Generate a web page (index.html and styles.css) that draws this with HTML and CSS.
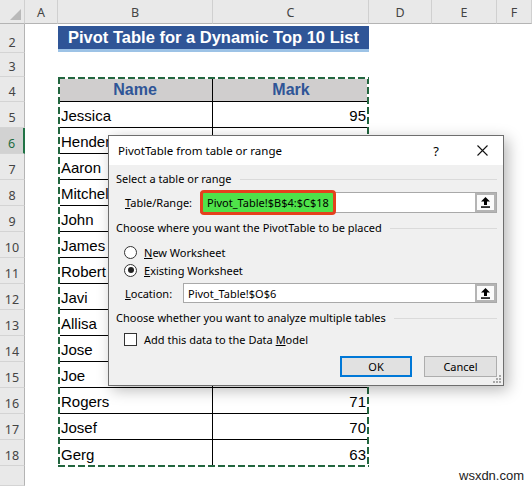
FILE: index.html
```html
<!DOCTYPE html>
<html>
<head>
<meta charset="utf-8">
<link rel="stylesheet" href="styles.css">
</head>
<body>
<div class="app">
  <div class="sheet">
    <div class="corner"><svg width="11" height="11" viewBox="0 0 11 11"><polygon points="11,0 11,11 0,11" fill="#b9b9b9"/></svg></div>
    <div class="ch">A</div>
    <div class="ch">B</div>
    <div class="ch">C</div>
    <div class="ch">D</div>
    <div class="ch">E</div>
    <div class="ch">F</div>

    <div class="rh">2</div><div class="title">Pivot Table for a Dynamic Top 10 List</div>
    <div class="rh">3</div>
    <div class="rh">4</div><div class="th th-name">Name</div><div class="th th-mark">Mark</div>
    <div class="rh">5</div><div class="td name">Jessica</div><div class="td num">95</div>
    <div class="rh sel">6</div><div class="td name">Henderson</div><div class="td num"></div>
    <div class="rh">7</div><div class="td name">Aaron</div><div class="td num"></div>
    <div class="rh">8</div><div class="td name">Mitchell</div><div class="td num"></div>
    <div class="rh">9</div><div class="td name">John</div><div class="td num"></div>
    <div class="rh">10</div><div class="td name">James</div><div class="td num"></div>
    <div class="rh">11</div><div class="td name">Robert</div><div class="td num"></div>
    <div class="rh">12</div><div class="td name">Javi</div><div class="td num"></div>
    <div class="rh">13</div><div class="td name">Allisa</div><div class="td num"></div>
    <div class="rh">14</div><div class="td name">Jose</div><div class="td num"></div>
    <div class="rh">15</div><div class="td name">Joe</div><div class="td num"></div>
    <div class="rh">16</div><div class="td name">Rogers</div><div class="td num">71</div>
    <div class="rh">17</div><div class="td name">Josef</div><div class="td num">70</div>
    <div class="rh">18</div><div class="td name last">Gerg</div><div class="td num last">63</div>
    <div class="rh"></div>
  </div>

  <div class="marquee"></div>

  <div class="dialog">
    <div class="dlg-title">
      <span class="dlg-caption">PivotTable from table or range</span>
      <span class="dlg-help">?</span>
      <span class="dlg-close"><svg width="11" height="11" viewBox="0 0 11 11"><path d="M0.5 0.5 L10.5 10.5 M10.5 0.5 L0.5 10.5" stroke="#111" stroke-width="1.1" fill="none"/></svg></span>
    </div>
    <div class="dlg-body">
      <div class="group g1">Select a table or range<span class="rule"></span></div>
      <div class="field f1">
        <span class="lbl lbl-range"><u>T</u>able/Range:</span>
        <div class="input in-range">
          <span class="hl">Pivot_Table!$B$4:$C$18</span>
          <span class="pick"><svg width="9" height="11" viewBox="0 0 9 11"><polygon points="4.5,0 9,4.5 6,4.5 6,8 3,8 3,4.5 0,4.5" fill="#000"/><rect x="0" y="9.3" width="9" height="1.5" fill="#000"/></svg></span>
        </div>
      </div>
      <div class="group g2">Choose where you want the PivotTable to be placed<span class="rule"></span></div>
      <div class="opt o1"><span class="radio"></span><span><u>N</u>ew Worksheet</span></div>
      <div class="opt o2"><span class="radio on"></span><span><u>E</u>xisting Worksheet</span></div>
      <div class="field f2">
        <span class="lbl lbl-loc"><u>L</u>ocation:</span>
        <div class="input in-loc">
          <span class="val">Pivot_Table!$O$6</span>
          <span class="pick"><svg width="9" height="11" viewBox="0 0 9 11"><polygon points="4.5,0 9,4.5 6,4.5 6,8 3,8 3,4.5 0,4.5" fill="#000"/><rect x="0" y="9.3" width="9" height="1.5" fill="#000"/></svg></span>
        </div>
      </div>
      <div class="group g3">Choose whether you want to analyze multiple tables<span class="rule"></span></div>
      <div class="opt c1"><span class="check"></span><span>Add this data to the Data <u>M</u>odel</span></div>
      <div class="buttons">
        <span class="btn btn-ok">OK</span>
        <span class="btn">Cancel</span>
      </div>
    </div>
    <svg class="grip" width="8" height="8" viewBox="0 0 8 8"><g fill="#a8a8a8"><rect x="6" y="0" width="2" height="2"/><rect x="3" y="3" width="2" height="2"/><rect x="6" y="3" width="2" height="2"/><rect x="0" y="6" width="2" height="2"/><rect x="3" y="6" width="2" height="2"/><rect x="6" y="6" width="2" height="2"/></g></svg>
  </div>

  <div class="watermark">wsxdn.com</div>
</div>
</body>
</html>
```

FILE: styles.css
```css
html, body {
  margin: 0;
  padding: 0;
  background: #fff;
}
body {
  width: 532px;
  height: 486px;
  overflow: hidden;
  font-family: "Liberation Sans", Arial, sans-serif;
}
.app {
  position: relative;
  width: 532px;
  height: 486px;
  overflow: hidden;
}

/* ---------- sheet ---------- */
.sheet {
  display: grid;
  grid-template-columns: 25px 33px 155px 156px 63px 65px 35px;
  grid-template-rows: 24px 29px 24px 25px repeat(14, 26px) 20px;
}
.corner, .ch {
  background: #e9e9e9;
  border-bottom: 1px solid #b4b4b4;
  border-right: 1px solid #d0d0d0;
  box-sizing: border-box;
}
.corner {
  display: flex;
  align-items: flex-end;
  justify-content: flex-end;
  padding: 0 3px 3px 0;
}
.ch {
  display: flex;
  align-items: center;
  justify-content: center;
  padding-top: 1px;
  font-family: "Noto Sans", sans-serif;
  font-size: 12.5px;
  color: #444;
}
.rh {
  grid-column: 1;
  background: #e9e9e9;
  border-bottom: 1px solid #d4d4d4;
  border-right: 1px solid #b4b4b4;
  box-sizing: border-box;
  display: flex;
  align-items: flex-end;
  justify-content: center;
  padding-bottom: 1px;
  line-height: 16px;
  font-family: "Noto Sans", sans-serif;
  font-size: 12.5px;
  color: #444;
}
.rh.sel {
  background: #d2d2d2;
  color: #1e6b40;
  border-right: 2px solid #217346;
}
.title {
  grid-column: 3 / span 2;
  margin-top: 2px;
  height: 23px;
  background: #2f5597;
  border-bottom: 3px solid #9dc3e6;
  color: #fff;
  font-weight: bold;
  font-size: 16.5px;
  line-height: 23px;
  text-align: center;
  white-space: nowrap;
}
.th {
  background: #d0cece;
  border-bottom: 1px solid #000;
  box-sizing: border-box;
  color: #2f5597;
  font-weight: bold;
  font-size: 16px;
  display: flex;
  align-items: center;
  justify-content: center;
  padding-top: 2px;
}
.th-name, .name { grid-column: 3; border-right: 1px solid #000; }
.th-mark, .num { grid-column: 4; }
.td {
  border-bottom: 1px solid #000;
  box-sizing: border-box;
  font-size: 15px;
  color: #000;
  display: flex;
  align-items: center;
  padding-top: 2px;
  white-space: nowrap;
  overflow: hidden;
}
.td.name { padding-left: 3px; }
.td.num { justify-content: flex-end; padding-right: 3px; }
.td.last { border-bottom: none; }

.marquee {
  position: absolute;
  left: 58px;
  top: 77px;
  width: 311px;
  height: 390px;
  background:
    repeating-linear-gradient(to right, #22663f 0 7px, #fff 7px 10px) top left / 100% 2px no-repeat,
    repeating-linear-gradient(to right, #22663f 0 7px, #fff 7px 10px) bottom left / 100% 2px no-repeat,
    repeating-linear-gradient(to bottom, #22663f 0 7px, #fff 7px 10px) top left / 2px 100% no-repeat,
    repeating-linear-gradient(to bottom, #22663f 0 7px, #fff 7px 10px) top right / 2px 100% no-repeat;
}

/* ---------- dialog ---------- */
.dialog {
  position: absolute;
  left: 108px;
  top: 135px;
  width: 396px;
  box-sizing: border-box;
  border: 1px solid #6e6e6e;
  background: #f0f0f0;
  box-shadow: 4px 4px 14px rgba(0, 0, 0, 0.28);
  font-family: "Noto Sans", sans-serif;
  font-size: 11px;
  color: #000;
}
.dlg-title {
  height: 29px;
  background: #fff;
  display: flex;
  align-items: center;
  padding-left: 9px;
}
.dlg-caption { flex: 1; font-size: 11.5px; }
.dlg-help {
  width: 14px;
  text-align: center;
  font-size: 13px;
  margin-right: 34px;
}
.dlg-close {
  display: flex;
  margin-right: 15px;
}
.dlg-body {
  padding: 0 6px 8px 7px;
  display: flex;
  flex-direction: column;
}
.group {
  height: 16px;
  line-height: 16px;
  display: flex;
  align-items: center;
  white-space: nowrap;
}
.rule {
  flex: 1;
  height: 1px;
  background: #dadada;
  margin-left: 8px;
}
.g1 { margin-top: 6px; }
.g2 { margin-top: 7px; }
.g3 { margin-top: 7px; }
.field {
  display: flex;
  align-items: center;
  padding-left: 9px;
}
.f1 { margin-top: 5px; height: 21px; }
.f2 { margin-top: 5px; height: 20px; }
.lbl { flex: none; white-space: nowrap; }
.lbl-range { width: 75px; }
.lbl-loc { width: 58px; }
.input {
  flex: 1;
  height: 100%;
  box-sizing: border-box;
  border: 1px solid #a9a9a9;
  background: #fff;
  display: flex;
  align-items: center;
  justify-content: space-between;
}
.hl {
  margin-left: -1px;
  height: 25px;
  box-sizing: border-box;
  border: 3px solid #e4411d;
  border-radius: 4px;
  background: #4fe24a;
  padding: 0 4px 0 4px;
  display: flex;
  align-items: center;
  white-space: nowrap;
}
.val { padding-left: 4px; }
.pick {
  align-self: stretch;
  width: 21px;
  box-sizing: border-box;
  border: 2px solid #b4b4b4;
  background: #fbfbfb;
  display: flex;
  align-items: center;
  justify-content: center;
}
.opt {
  height: 16px;
  display: flex;
  align-items: center;
  padding-left: 8px;
  white-space: nowrap;
}
.o1 { margin-top: 8px; }
.o2 { margin-top: 2px; }
.c1 { margin-top: 5px; }
.radio, .check {
  width: 13px;
  height: 13px;
  box-sizing: border-box;
  border: 1px solid #333;
  background: #fff;
  margin-right: 7px;
  flex: none;
  display: flex;
  align-items: center;
  justify-content: center;
}
.radio { border-radius: 50%; }
.radio.on::after {
  content: "";
  width: 6px;
  height: 6px;
  border-radius: 50%;
  background: #222;
}
.buttons {
  margin-top: 9px;
  display: flex;
  justify-content: flex-end;
  gap: 12px;
}
.btn {
  width: 73px;
  height: 21px;
  box-sizing: border-box;
  border: 1px solid #adadad;
  background: #e1e1e1;
  display: flex;
  align-items: center;
  justify-content: center;
}
.btn-ok {
  width: 72px;
  border: 2px solid #0078d7;
}
.grip {
  position: absolute;
  right: 2px;
  bottom: 2px;
}

.watermark {
  position: absolute;
  left: 459px;
  top: 468px;
  font-family: "Liberation Sans", Arial, sans-serif;
  font-size: 13px;
  color: #222;
}
```
